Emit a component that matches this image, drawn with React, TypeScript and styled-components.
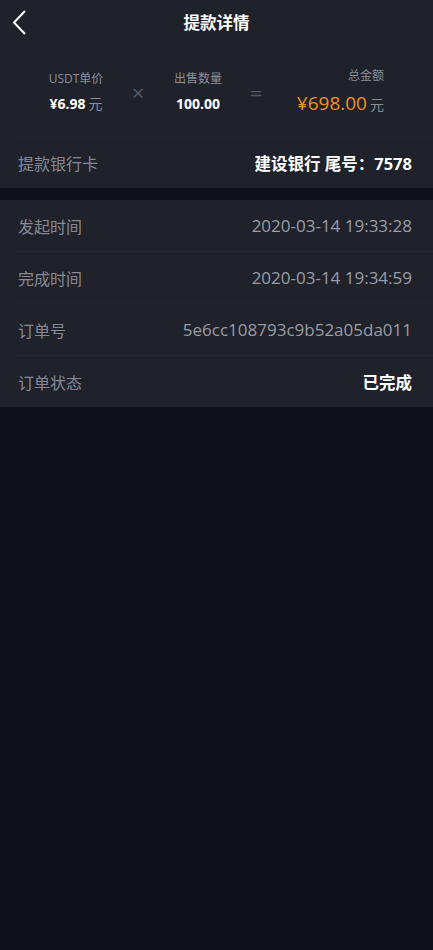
import * as React from 'react'
import styled, { createGlobalStyle } from 'styled-components'

const GlobalStyle = createGlobalStyle`
    html, body {
        margin: 0;
        padding: 0;
        background: #0e1119;
        font-family: "Open Sans", "Noto Sans CJK SC", sans-serif;
    }
`

const Page = styled.div`
    min-height: 950px;
    background: #0e1119;
`

const TopPanel = styled.div`
    background: #1f222b;
`

const Header = styled.div`
    height: 43px;
    display: flex;
    align-items: center;
    justify-content: center;
    position: relative;
`

const BackButton = styled.div`
    position: absolute;
    left: 10px;
    top: 8px;
    width: 20px;
    height: 30px;
    display: flex;
    align-items: center;
`

const Title = styled.div`
    color: #ffffff;
    font-size: 16.5px;
    font-weight: 700;
`

const Summary = styled.div`
    display: grid;
    grid-template-columns: 96px 28px 92px 24px 116px;
    align-items: center;
    padding: 24px 0 19px 28px;
    height: 50px;
`

const Cell = styled.div<{ $align?: 'center' | 'right' }>`
    display: flex;
    flex-direction: column;
    align-items: ${(p) => (p.$align === 'right' ? 'flex-end' : 'center')};
    gap: 9px;
`

const CellLabel = styled.div`
    color: #8b8e98;
    font-size: 12px;
    line-height: 14px;
`

const CellValue = styled.div<{ $big?: boolean }>`
    color: ${(p) => (p.$big ? '#f0901e' : '#ffffff')};
    font-size: ${(p) => (p.$big ? '19px' : '14px')};
    font-weight: ${(p) => (p.$big ? 400 : 700)};
    line-height: ${(p) => (p.$big ? '22px' : '18px')};
    white-space: nowrap;
`

const Unit = styled.span`
    color: #8b8e98;
    font-size: 14px;
    font-weight: 400;
    margin-left: 3px;
`

const Operator = styled.div`
    color: #555966;
    font-size: 22px;
    text-align: center;
    line-height: 22px;
`

const Row = styled.div<{ $divider?: boolean }>`
    display: flex;
    align-items: center;
    justify-content: space-between;
    height: 51px;
    margin-left: 18px;
    padding-right: 21px;
    border-top: ${(p) => (p.$divider ? '1px solid #252831' : 'none')};
`

const Label = styled.div`
    color: #868993;
    font-size: 16px;
`

const Value = styled.div<{ $strong?: boolean }>`
    color: ${(p) => (p.$strong ? '#ffffff' : '#9a9ca6')};
    font-size: ${(p) => (p.$strong ? '16.5px' : '17px')};
    font-weight: ${(p) => (p.$strong ? 700 : 400)};
`

const Gap = styled.div`
    height: 12px;
`

const ListPanel = styled.div`
    background: #1f222b;
`

const details = [
    { label: '发起时间', value: '2020-03-14 19:33:28' },
    { label: '完成时间', value: '2020-03-14 19:34:59' },
    { label: '订单号', value: '5e6cc108793c9b52a05da011' },
    { label: '订单状态', value: '已完成', strong: true },
]

const App: React.FC = () => (
    <Page>
        <GlobalStyle />
        <TopPanel>
            <Header>
                <BackButton>
                    <svg width="18" height="28" viewBox="0 0 18 28">
                        <path
                            d="M15 2 L4 13.5 L15 25"
                            fill="none"
                            stroke="#ffffff"
                            strokeWidth="2"
                        />
                    </svg>
                </BackButton>
                <Title>提款详情</Title>
            </Header>
            <Summary>
                <Cell>
                    <CellLabel>USDT单价</CellLabel>
                    <CellValue>
                        ¥6.98<Unit>元</Unit>
                    </CellValue>
                </Cell>
                <Operator>×</Operator>
                <Cell>
                    <CellLabel>出售数量</CellLabel>
                    <CellValue>100.00</CellValue>
                </Cell>
                <Operator>=</Operator>
                <Cell $align="right">
                    <CellLabel>总金额</CellLabel>
                    <CellValue $big>
                        ¥698.00<Unit>元</Unit>
                    </CellValue>
                </Cell>
            </Summary>
            <Row $divider>
                <Label>提款银行卡</Label>
                <Value $strong>建设银行 尾号：7578</Value>
            </Row>
        </TopPanel>
        <Gap />
        <ListPanel>
            {details.map((d, i) => (
                <Row key={d.label} $divider={i > 0}>
                    <Label>{d.label}</Label>
                    <Value $strong={d.strong}>{d.value}</Value>
                </Row>
            ))}
        </ListPanel>
    </Page>
)

export default App
